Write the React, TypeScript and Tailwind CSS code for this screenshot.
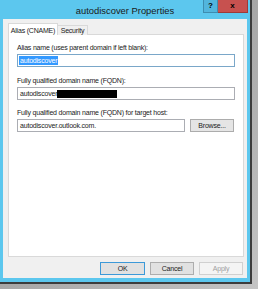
export default function App() {
  const font = { fontFamily: '"Liberation Sans", Arial, sans-serif' };
  return (
    <div
      className="w-[258px] h-[289px] bg-gradient-to-br from-[#8a8a8a] to-[#c4c4c4] overflow-hidden"
      style={font}
    >
      <div className="w-[252px] h-[284px] border-r-2 border-b-2 border-[#3c3c3c]">
        <div className="w-[250px] h-[282px] bg-[#5cc7ee] flex flex-col pl-[3px] pr-[3px] pb-[4px]">
          {/* title bar */}
          <div className="h-[19px] relative flex items-center justify-center">
            <span className="text-[9.4px] text-[#1a1a1a] leading-none mt-[2px]">autodiscover Properties</span>
            <div className="absolute top-0 right-[-1px] flex">
              <div className="w-[15px] h-[13px] bg-[#52b5dd] border border-[#3e8db0] border-t-0 flex items-center justify-center text-[8px] font-bold text-black leading-none">
                ?
              </div>
              <div className="w-[30px] h-[13px] bg-[#c7514f] border border-[#9e3a38] border-t-0 border-l-0 flex items-center justify-center text-[8px] font-bold text-black leading-none">
                x
              </div>
            </div>
          </div>

          {/* client area */}
          <div className="flex-1 bg-[#f0f0f0] flex flex-col pl-[5px] pr-[3px] pt-[4px] text-[7px] tracking-[-0.2px] text-[#222]">
            {/* tabs */}
            <div className="flex items-end h-[12px] relative z-10">
              <div className="h-[12px] w-[50px] bg-white border border-[#d9d9d9] border-b-0 leading-none flex items-center justify-center whitespace-nowrap pt-[1px]">
                Alias (CNAME)
              </div>
              <div className="h-[10px] w-[30px] bg-[#f0f0f0] border border-[#d9d9d9] border-l-0 border-b-0 leading-none flex items-center justify-center whitespace-nowrap">
                Security
              </div>
            </div>

            {/* panel */}
            <div className="h-[223px] -mt-[1px] bg-white border border-[#d9d9d9] px-[8px] pt-[9px]">
              <div className="leading-none">Alias name (uses parent domain if left blank):</div>
              <div className="mt-[3px] h-[13px] border border-[#7aa7c9] flex items-center px-[1px]">
                <span className="bg-[#3399ff] text-white leading-[9px] px-[1px]">autodiscover</span>
              </div>

              <div className="mt-[10px] leading-none">Fully qualified domain name (FQDN):</div>
              <div className="mt-[3px] h-[13px] border border-[#abadb3] flex items-center px-[2px]">
                <span className="leading-none">autodiscover</span>
                <span className="h-[8px] w-[60px] bg-black"></span>
              </div>

              <div className="mt-[9px] leading-none">Fully qualified domain name (FQDN) for target host:</div>
              <div className="mt-[3px] flex gap-[5px]">
                <div className="w-[168px] h-[13px] border border-[#abadb3] flex items-center px-[2px]">
                  <span className="leading-none">autodiscover.outlook.com.</span>
                </div>
                <div className="w-[44px] h-[13px] bg-[#e5e5e5] border border-[#acacac] flex items-center justify-center leading-none">
                  Browse...
                </div>
              </div>
            </div>

            {/* buttons */}
            <div className="flex justify-end gap-[5px] mt-[5px] pr-[1px]">
              <div className="w-[45px] h-[13px] bg-[#e1e1e1] border border-[#3c99d8] flex items-center justify-center leading-none">
                OK
              </div>
              <div className="w-[44px] h-[13px] bg-[#e1e1e1] border border-[#adadad] flex items-center justify-center leading-none">
                Cancel
              </div>
              <div className="w-[44px] h-[13px] bg-[#f4f4f4] border border-[#d0d0d0] flex items-center justify-center leading-none text-[#a0a0a0]">
                Apply
              </div>
            </div>
          </div>
        </div>
      </div>
    </div>
  );
}
